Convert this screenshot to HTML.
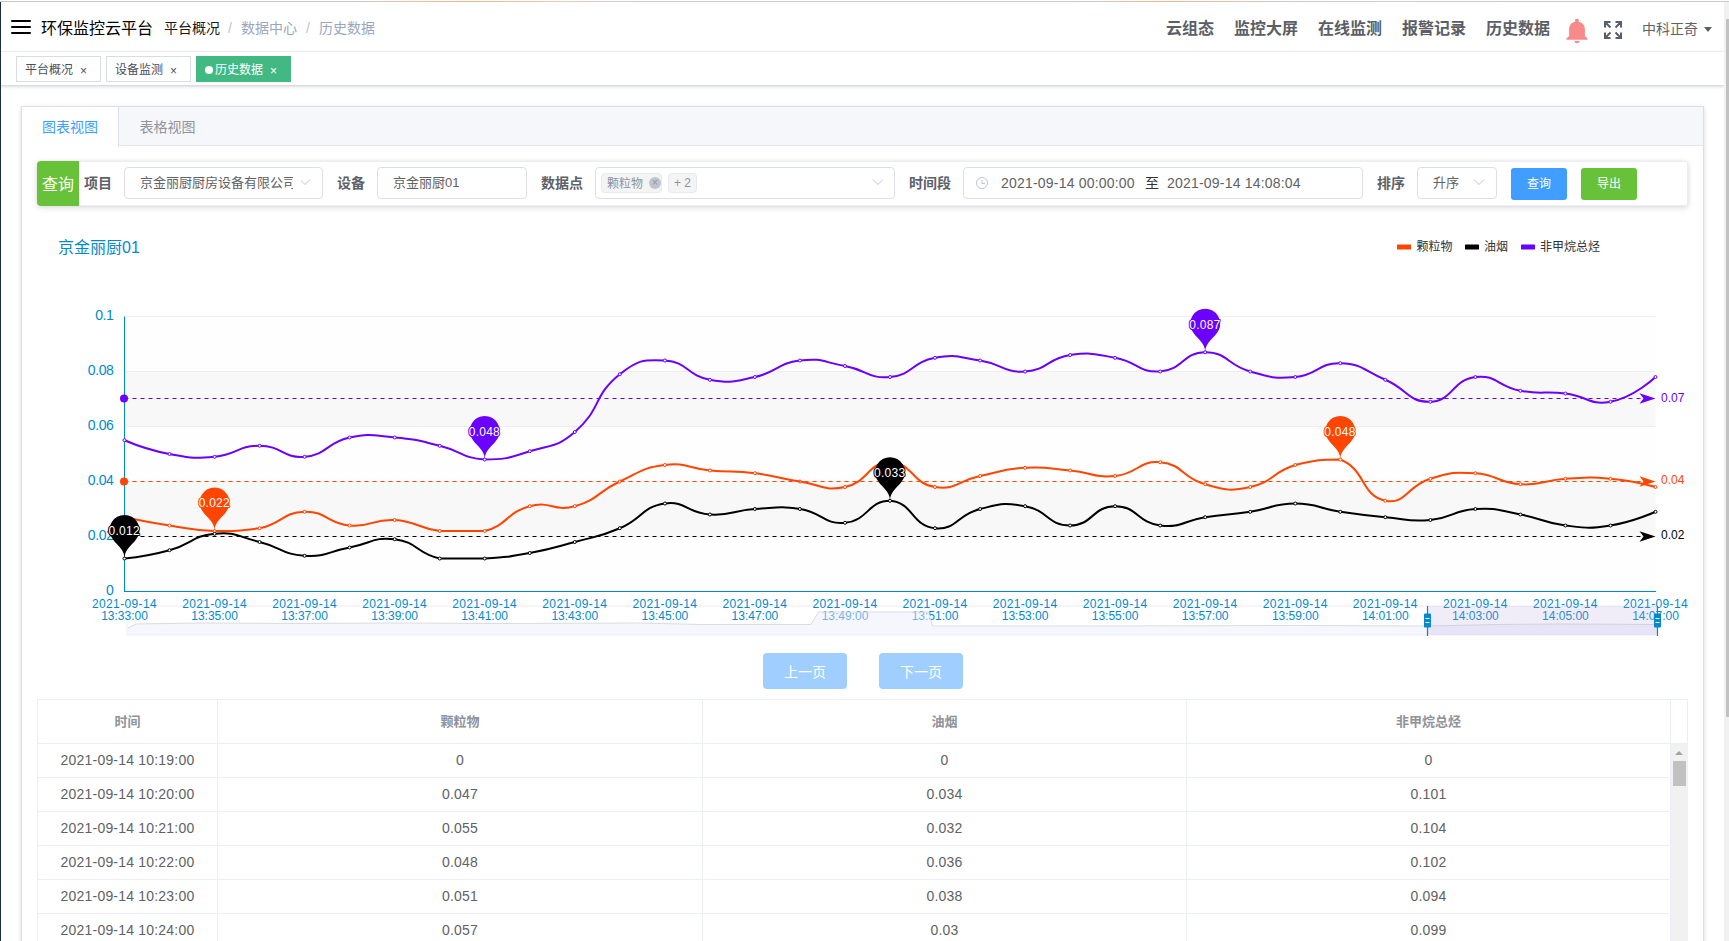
<!DOCTYPE html>
<html lang="zh-CN">
<head>
<meta charset="utf-8">
<title>环保监控云平台</title>
<style>
*{box-sizing:border-box}
html,body{margin:0;padding:0}
body{width:1729px;height:941px;overflow:hidden;background:#fff;position:relative;font-family:"Liberation Sans","Noto Sans CJK SC",sans-serif;color:#303133;font-size:14px}
.abs{position:absolute}
.topline{left:0;top:1px;width:1729px;height:1px;background:linear-gradient(90deg,#c9c9c9 0,#c9c9c9 20%,#e9c3a8 24%,#f0b48e 27%,#e6c9b6 32%,#cdcdcd 38%,#cdcdcd 62%,#e0c0ac 65%,#e8b898 68%,#d8c8c0 73%,#c9cfd2 80%,#c4ccd0 100%)}
.leftbar{left:0;top:2px;width:1px;height:939px;background:#1f2d43}
.pagescroll{left:1724px;top:2px;width:5px;height:939px;background:#f1f1f1}
.pagescroll i{position:absolute;left:2px;top:17px;width:3px;height:698px;background:#c1c1c1}
/* header */
.navbar{left:1px;top:2px;width:1723px;height:50px;background:#fff;border-bottom:1px solid #f3f3f3}
.ham{left:11px;top:20px;width:20px;height:14px}
.ham i{position:absolute;left:0;width:20px;height:2px;border-radius:1px;background:#000}
.title{left:41px;top:17px;font-size:16px;line-height:24px;color:#000;white-space:nowrap}
.bc{top:16px;font-size:14px;line-height:24px;white-space:nowrap}
.nav{top:17px;font-size:16px;line-height:24px;font-weight:bold;color:#5a5e66;white-space:nowrap}
.user{left:1642px;top:17px;font-size:14px;line-height:24px;color:#606266;white-space:nowrap}
/* tags */
.tagsbar{left:1px;top:52px;width:1723px;height:34px;background:#fff;border-bottom:1px solid #d8dce5;box-shadow:0 1px 3px 0 rgba(0,0,0,.12),0 0 3px 0 rgba(0,0,0,.04)}
.tag{top:56px;height:26px;border:1px solid #d8dce5;background:#fff;color:#495060;font-size:12px;line-height:26px;padding-left:8px;white-space:nowrap}
.tag.on{background:#42b983;border-color:#42b983;color:#fff}
.tag .x{position:absolute;top:1px;font-size:12px;margin-left:1px}
/* card */
.card{left:21px;top:106px;width:1683px;height:900px;border:1px solid #dcdfe6;background:#fff;box-shadow:0 2px 4px 0 rgba(0,0,0,.12),0 0 6px 0 rgba(0,0,0,.04)}
.tabhead{left:0;top:0;width:1681px;height:39px;background:#f5f7fa;border-bottom:1px solid #e4e7ed}
.tab1{left:0;top:0;width:97px;height:40px;background:#fff;border-right:1px solid #dcdfe6;color:#409eff;font-size:14px;line-height:40px;text-align:center;padding-right:0}
.tab2{left:97px;top:0;width:97px;height:40px;color:#909399;font-size:14px;line-height:40px;text-align:center}
/* filter */
.filter{left:37px;top:161px;width:1651px;height:45px;background:#fff;border-radius:4px 2px 2px 4px;box-shadow:inset 0 0 0 1px #ebeef5,0 2px 6px 0 rgba(0,0,0,.12),0 0 4px 0 rgba(0,0,0,.06)}
.qlabel{left:0;top:0;width:42px;height:45px;background:#67c23a;color:#fff;font-size:16px;line-height:47px;text-align:center;border-radius:4px 0 0 4px}
.flabel{top:0;height:46px;line-height:44px;font-size:14px;font-weight:bold;color:#5d6168;white-space:nowrap}
.inp{top:6px;height:32px;border:1px solid #dcdfe6;border-radius:4px;background:#fff;font-size:13px;line-height:30px;color:#606266;padding-left:15px;white-space:nowrap;overflow:hidden}
.btn{top:7px;width:56px;height:32px;border-radius:3px;color:#fff;font-size:12px;line-height:33px;text-align:center}
.pbtn{top:653px;width:84px;height:36px;border-radius:4px;background:#a0cfff;color:#fff;font-size:14px;line-height:38px;text-align:center}
/* table */
.tbl{left:37px;top:699px;width:1651px;height:260px;border:1px solid #ebeef5;border-bottom:none;background:#fff}
.th{top:0;height:44px;line-height:44px;font-size:13px;font-weight:bold;color:#909399;text-align:center;border-right:1px solid #ebeef5;border-bottom:1px solid #ebeef5}
.row{left:0;width:1632px;height:34px;border-bottom:1px solid #ebeef5}
.td{top:0;height:33px;line-height:32px;font-size:14px;letter-spacing:.2px;color:#606266;text-align:center;border-right:1px solid #ebeef5}
.c1{left:0;width:180px}.c2{left:180px;width:485px}.c3{left:665px;width:484px}.c4{left:1149px;width:484px}
.tscroll{left:1633px;top:44px;width:17px;height:220px;background:#f1f1f1}
</style>
</head>
<body>
<div class="abs topline"></div>
<div class="abs leftbar"></div>

<div class="abs navbar"></div>
<div class="abs ham"><i style="top:0"></i><i style="top:6px"></i><i style="top:12px"></i></div>
<div class="abs title">环保监控云平台</div>
<div class="abs bc" style="left:164px;color:#1a1a1a">平台概况</div>
<div class="abs bc" style="left:228px;color:#c0c4cc">/</div>
<div class="abs bc" style="left:241px;color:#97a8be">数据中心</div>
<div class="abs bc" style="left:306px;color:#c0c4cc">/</div>
<div class="abs bc" style="left:319px;color:#97a8be">历史数据</div>

<div class="abs nav" style="left:1166px">云组态</div>
<div class="abs nav" style="left:1234px">监控大屏</div>
<div class="abs nav" style="left:1318px">在线监测</div>
<div class="abs nav" style="left:1402px">报警记录</div>
<div class="abs nav" style="left:1486px">历史数据</div>
<svg class="abs" style="left:1565px;top:18px" width="24" height="26" viewBox="0 0 24 26"><path d="M10.100 2.200a1.850 1.400 0 0 1 3.700 0V4.100C17.800 4.600 19.900 7.400 19.900 11.700V17.900L22.500 20.500V21.700H1.400V20.500L4.100 17.900V11.700C4.100 7.400 6.100 4.600 10.100 4.100ZM9.400 22.900H14.500A2.550 2.300 0 0 1 9.400 22.900Z" fill="#f98a8a"/></svg>
<svg class="abs" style="left:1604px;top:21px" width="18" height="18" viewBox="0 0 18 18" fill="none" stroke="#5a5e66" stroke-width="2"><path d="M1 6.500V1h5.500M1.500 1.500L6.500 6.500M11.500 1H17v5.500M16.500 1.500L11.500 6.500M1 11.500V17h5.500M1.500 16.500L6.500 11.500M17 11.500V17h-5.500M16.500 16.500L11.500 11.500"/></svg>
<div class="abs user">中科正奇</div>
<div class="abs" style="left:1704px;top:27px;width:0;height:0;border-left:4px solid transparent;border-right:4px solid transparent;border-top:5px solid #5a5e66"></div>

<div class="abs tagsbar"></div>
<div class="abs tag" style="left:16px;width:85px">平台概况<span class="x" style="left:62px">×</span></div>
<div class="abs tag" style="left:106px;width:85px">设备监测<span class="x" style="left:62px">×</span></div>
<div class="abs tag on" style="left:196px;width:95px"><span style="display:inline-block;width:8px;height:8px;border-radius:50%;background:#fff;margin-right:2px;position:relative;top:0"></span>历史数据<span class="x" style="left:72px">×</span></div>

<div class="abs card">
  <div class="abs tabhead"></div>
  <div class="abs tab1">图表视图</div>
  <div class="abs tab2">表格视图</div>
</div>

<div class="abs filter">
  <div class="abs qlabel">查询</div>
  <div class="abs flabel" style="left:47px">项目</div>
  <div class="abs inp" style="left:87px;width:199px">京金丽厨厨房设备有限公司</div>
  <svg class="abs" style="left:262px;top:17px" width="12" height="8" viewBox="0 0 12 8" fill="none" stroke="#c0c4cc" stroke-width="1"><path d="M1 1.500l5 5 5-5"/></svg>
  <div class="abs" style="left:256px;top:8px;width:8px;height:28px;background:#fff"></div>
  <div class="abs flabel" style="left:300px">设备</div>
  <div class="abs inp" style="left:340px;width:150px">京金丽厨01</div>
  <div class="abs flabel" style="left:504px">数据点</div>
  <div class="abs inp" style="left:558px;width:300px"></div>
  <div class="abs" style="left:564px;top:12px;width:61px;height:20px;border:1px solid #e9e9eb;border-radius:4px;background:#f4f4f5;color:#909399;font-size:12px;line-height:20px;padding-left:5px">颗粒物</div>
  <div class="abs" style="left:612px;top:16px;width:12px;height:12px;border-radius:50%;background:#c0c4cc;color:#909399;font-size:10px;line-height:11px;text-align:center">×</div>
  <div class="abs" style="left:631px;top:12px;width:29px;height:20px;border:1px solid #e9e9eb;border-radius:4px;background:#f4f4f5;color:#909399;font-size:12px;line-height:18px;text-align:center">+ 2</div>
  <svg class="abs" style="left:835px;top:17px" width="12" height="8" viewBox="0 0 12 8" fill="none" stroke="#c0c4cc" stroke-width="1"><path d="M1 1.500l5 5 5-5"/></svg>
  <div class="abs flabel" style="left:872px">时间段</div>
  <div class="abs inp" style="left:926px;width:400px"></div>
  <svg class="abs" style="left:938px;top:15px" width="14" height="14" viewBox="0 0 14 14" fill="none" stroke="#c0c4cc" stroke-width="1"><circle cx="7" cy="7" r="5.500"/><path d="M7 3.500V7.500H10"/></svg>
  <div class="abs" style="left:964px;top:7px;font-size:14px;letter-spacing:.2px;line-height:31px;color:#606266;white-space:nowrap">2021-09-14 00:00:00</div>
  <div class="abs" style="left:1108px;top:7px;font-size:14px;line-height:30px;color:#303133">至</div>
  <div class="abs" style="left:1130px;top:7px;font-size:14px;letter-spacing:.2px;line-height:31px;color:#606266;white-space:nowrap">2021-09-14 14:08:04</div>
  <div class="abs flabel" style="left:1340px">排序</div>
  <div class="abs inp" style="left:1380px;width:80px">升序</div>
  <svg class="abs" style="left:1436px;top:17px" width="12" height="8" viewBox="0 0 12 8" fill="none" stroke="#c0c4cc" stroke-width="1"><path d="M1 1.500l5 5 5-5"/></svg>
  <div class="abs btn" style="left:1474px;background:#409eff">查询</div>
  <div class="abs btn" style="left:1544px;background:#67c23a">导出</div>
</div>

<svg class="chart" width="1729" height="440" viewBox="0 210 1729 440" style="position:absolute;left:0;top:210px">
<rect x="124.5" y="536.5" width="1531.0" height="55.0" fill="#fefefe"/>
<rect x="124.5" y="481.5" width="1531.0" height="55.0" fill="#f8f8f8"/>
<rect x="124.5" y="426.5" width="1531.0" height="55.0" fill="#fefefe"/>
<rect x="124.5" y="371.5" width="1531.0" height="55.0" fill="#f8f8f8"/>
<rect x="124.5" y="316.5" width="1531.0" height="55.0" fill="#fefefe"/>
<line x1="124.5" y1="536.5" x2="1655.5" y2="536.5" stroke="#eee" stroke-width="1"/>
<line x1="124.5" y1="481.5" x2="1655.5" y2="481.5" stroke="#eee" stroke-width="1"/>
<line x1="124.5" y1="426.5" x2="1655.5" y2="426.5" stroke="#eee" stroke-width="1"/>
<line x1="124.5" y1="371.5" x2="1655.5" y2="371.5" stroke="#eee" stroke-width="1"/>
<line x1="124.5" y1="316.5" x2="1655.5" y2="316.5" stroke="#eee" stroke-width="1"/>
<line x1="124.5" y1="316.5" x2="124.5" y2="591.5" stroke="#008acd" stroke-width="1"/>
<line x1="124.0" y1="591.5" x2="1656.0" y2="591.5" stroke="#008acd" stroke-width="1"/>
<text x="113.5" y="595.3" text-anchor="end" font-size="14" letter-spacing="-0.4" fill="#008acd" font-family="Liberation Sans, sans-serif">0</text>
<text x="113.5" y="540.3" text-anchor="end" font-size="14" letter-spacing="-0.4" fill="#008acd" font-family="Liberation Sans, sans-serif">0.02</text>
<text x="113.5" y="485.3" text-anchor="end" font-size="14" letter-spacing="-0.4" fill="#008acd" font-family="Liberation Sans, sans-serif">0.04</text>
<text x="113.5" y="430.3" text-anchor="end" font-size="14" letter-spacing="-0.4" fill="#008acd" font-family="Liberation Sans, sans-serif">0.06</text>
<text x="113.5" y="375.3" text-anchor="end" font-size="14" letter-spacing="-0.4" fill="#008acd" font-family="Liberation Sans, sans-serif">0.08</text>
<text x="113.5" y="320.3" text-anchor="end" font-size="14" letter-spacing="-0.4" fill="#008acd" font-family="Liberation Sans, sans-serif">0.1</text>
<rect x="127" y="606" width="1530" height="29" fill="#fff" stroke="#eeeef6" stroke-width="1"/>
<text x="124.5" y="608" text-anchor="middle" font-size="12" letter-spacing="0.35" fill="#008acd" font-family="Liberation Sans, sans-serif">2021-09-14</text>
<text x="124.5" y="620" text-anchor="middle" font-size="12" fill="#008acd" font-family="Liberation Sans, sans-serif">13:33:00</text>
<text x="214.6" y="608" text-anchor="middle" font-size="12" letter-spacing="0.35" fill="#008acd" font-family="Liberation Sans, sans-serif">2021-09-14</text>
<text x="214.6" y="620" text-anchor="middle" font-size="12" fill="#008acd" font-family="Liberation Sans, sans-serif">13:35:00</text>
<text x="304.6" y="608" text-anchor="middle" font-size="12" letter-spacing="0.35" fill="#008acd" font-family="Liberation Sans, sans-serif">2021-09-14</text>
<text x="304.6" y="620" text-anchor="middle" font-size="12" fill="#008acd" font-family="Liberation Sans, sans-serif">13:37:00</text>
<text x="394.7" y="608" text-anchor="middle" font-size="12" letter-spacing="0.35" fill="#008acd" font-family="Liberation Sans, sans-serif">2021-09-14</text>
<text x="394.7" y="620" text-anchor="middle" font-size="12" fill="#008acd" font-family="Liberation Sans, sans-serif">13:39:00</text>
<text x="484.7" y="608" text-anchor="middle" font-size="12" letter-spacing="0.35" fill="#008acd" font-family="Liberation Sans, sans-serif">2021-09-14</text>
<text x="484.7" y="620" text-anchor="middle" font-size="12" fill="#008acd" font-family="Liberation Sans, sans-serif">13:41:00</text>
<text x="574.8" y="608" text-anchor="middle" font-size="12" letter-spacing="0.35" fill="#008acd" font-family="Liberation Sans, sans-serif">2021-09-14</text>
<text x="574.8" y="620" text-anchor="middle" font-size="12" fill="#008acd" font-family="Liberation Sans, sans-serif">13:43:00</text>
<text x="664.9" y="608" text-anchor="middle" font-size="12" letter-spacing="0.35" fill="#008acd" font-family="Liberation Sans, sans-serif">2021-09-14</text>
<text x="664.9" y="620" text-anchor="middle" font-size="12" fill="#008acd" font-family="Liberation Sans, sans-serif">13:45:00</text>
<text x="754.9" y="608" text-anchor="middle" font-size="12" letter-spacing="0.35" fill="#008acd" font-family="Liberation Sans, sans-serif">2021-09-14</text>
<text x="754.9" y="620" text-anchor="middle" font-size="12" fill="#008acd" font-family="Liberation Sans, sans-serif">13:47:00</text>
<text x="845.0" y="608" text-anchor="middle" font-size="12" letter-spacing="0.35" fill="#008acd" font-family="Liberation Sans, sans-serif">2021-09-14</text>
<text x="845.0" y="620" text-anchor="middle" font-size="12" fill="#008acd" font-family="Liberation Sans, sans-serif">13:49:00</text>
<text x="935.0" y="608" text-anchor="middle" font-size="12" letter-spacing="0.35" fill="#008acd" font-family="Liberation Sans, sans-serif">2021-09-14</text>
<text x="935.0" y="620" text-anchor="middle" font-size="12" fill="#008acd" font-family="Liberation Sans, sans-serif">13:51:00</text>
<text x="1025.1" y="608" text-anchor="middle" font-size="12" letter-spacing="0.35" fill="#008acd" font-family="Liberation Sans, sans-serif">2021-09-14</text>
<text x="1025.1" y="620" text-anchor="middle" font-size="12" fill="#008acd" font-family="Liberation Sans, sans-serif">13:53:00</text>
<text x="1115.1" y="608" text-anchor="middle" font-size="12" letter-spacing="0.35" fill="#008acd" font-family="Liberation Sans, sans-serif">2021-09-14</text>
<text x="1115.1" y="620" text-anchor="middle" font-size="12" fill="#008acd" font-family="Liberation Sans, sans-serif">13:55:00</text>
<text x="1205.2" y="608" text-anchor="middle" font-size="12" letter-spacing="0.35" fill="#008acd" font-family="Liberation Sans, sans-serif">2021-09-14</text>
<text x="1205.2" y="620" text-anchor="middle" font-size="12" fill="#008acd" font-family="Liberation Sans, sans-serif">13:57:00</text>
<text x="1295.3" y="608" text-anchor="middle" font-size="12" letter-spacing="0.35" fill="#008acd" font-family="Liberation Sans, sans-serif">2021-09-14</text>
<text x="1295.3" y="620" text-anchor="middle" font-size="12" fill="#008acd" font-family="Liberation Sans, sans-serif">13:59:00</text>
<text x="1385.3" y="608" text-anchor="middle" font-size="12" letter-spacing="0.35" fill="#008acd" font-family="Liberation Sans, sans-serif">2021-09-14</text>
<text x="1385.3" y="620" text-anchor="middle" font-size="12" fill="#008acd" font-family="Liberation Sans, sans-serif">14:01:00</text>
<text x="1475.4" y="608" text-anchor="middle" font-size="12" letter-spacing="0.35" fill="#008acd" font-family="Liberation Sans, sans-serif">2021-09-14</text>
<text x="1475.4" y="620" text-anchor="middle" font-size="12" fill="#008acd" font-family="Liberation Sans, sans-serif">14:03:00</text>
<text x="1565.4" y="608" text-anchor="middle" font-size="12" letter-spacing="0.35" fill="#008acd" font-family="Liberation Sans, sans-serif">2021-09-14</text>
<text x="1565.4" y="620" text-anchor="middle" font-size="12" fill="#008acd" font-family="Liberation Sans, sans-serif">14:05:00</text>
<text x="1655.5" y="608" text-anchor="middle" font-size="12" letter-spacing="0.35" fill="#008acd" font-family="Liberation Sans, sans-serif">2021-09-14</text>
<text x="1655.5" y="620" text-anchor="middle" font-size="12" fill="#008acd" font-family="Liberation Sans, sans-serif">14:07:00</text>
<polygon points="127.0,635.0 128.0,628.0 136.0,624.0 200.0,623.0 300.0,623.5 400.0,623.0 500.0,623.5 640.0,623.0 700.0,624.5 811.0,624.5 818.5,612.0 928.5,612.0 932.5,626.0 1100.0,626.0 1300.0,625.5 1427.0,626.0 1500.0,624.5 1560.0,624.0 1657.0,624.5 1657.0,635.0" fill="rgba(236,236,252,0.45)"/>
<polyline points="128.0,628.0 136.0,624.0 200.0,623.0 300.0,623.5 400.0,623.0 500.0,623.5 640.0,623.0 700.0,624.5 811.0,624.5 818.5,612.0 928.5,612.0 932.5,626.0 1100.0,626.0 1300.0,625.5 1427.0,626.0 1500.0,624.5 1560.0,624.0 1657.0,624.5" fill="none" stroke="#dcdce0" stroke-width="1"/>
<rect x="1427.5" y="606" width="230.0" height="29" fill="rgba(182,162,222,0.2)"/>
<line x1="1427.5" y1="606" x2="1427.5" y2="636" stroke="#008acd" stroke-width="1.2"/>
<rect x="1424.0" y="613.5" width="7" height="14" rx="1" fill="#008acd"/>
<line x1="1425.5" y1="618.5" x2="1429.5" y2="618.5" stroke="#fff" stroke-width="1"/>
<line x1="1425.5" y1="622.5" x2="1429.5" y2="622.5" stroke="#fff" stroke-width="1"/>
<line x1="1657.5" y1="606" x2="1657.5" y2="636" stroke="#008acd" stroke-width="1.2"/>
<rect x="1654.0" y="613.5" width="7" height="14" rx="1" fill="#008acd"/>
<line x1="1655.5" y1="618.5" x2="1659.5" y2="618.5" stroke="#fff" stroke-width="1"/>
<line x1="1655.5" y1="622.5" x2="1659.5" y2="622.5" stroke="#fff" stroke-width="1"/>
<path d="M124.50 517.25C124.50 517.25 146.91 522.05 169.53 525.50C191.94 528.92 191.98 530.31 214.56 531.00C237.01 531.00 237.76 531.00 259.59 528.25C282.79 523.29 281.90 512.44 304.62 511.75C326.92 511.07 326.71 523.40 349.65 525.50C371.74 527.52 372.40 518.64 394.68 520.00C417.43 521.39 416.86 528.21 439.71 531.00C461.89 531.00 463.70 531.00 484.74 531.00C508.73 524.40 505.77 512.85 529.76 506.25C550.80 500.47 553.76 512.03 574.79 506.25C598.79 499.65 596.53 492.17 619.82 481.50C641.56 471.54 641.71 467.83 664.85 465.00C686.74 462.33 687.31 468.43 709.88 470.50C732.33 472.56 732.56 470.52 754.91 473.25C777.59 476.02 777.32 478.05 799.94 481.50C822.35 484.92 823.86 491.51 844.97 487.00C868.89 481.89 867.49 462.25 890.00 462.25C912.51 462.25 911.36 483.39 935.03 487.00C956.39 490.26 957.40 480.84 980.06 476.00C1002.43 471.22 1002.41 469.14 1025.09 467.75C1047.44 466.39 1047.67 468.44 1070.12 470.50C1092.69 472.57 1093.05 478.02 1115.15 476.00C1138.08 473.90 1138.36 460.25 1160.18 462.25C1183.39 464.38 1181.51 477.74 1205.21 484.25C1226.54 490.11 1228.90 491.56 1250.24 487.00C1273.93 481.93 1271.63 472.22 1295.26 465.00C1316.66 459.50 1321.10 459.50 1340.29 459.50C1366.13 469.76 1360.59 495.46 1385.32 500.75C1405.62 505.09 1406.72 485.97 1430.35 478.75C1451.75 472.22 1453.11 471.89 1475.38 473.25C1498.14 474.64 1497.65 482.86 1520.41 484.25C1542.68 485.61 1542.84 480.13 1565.44 478.75C1587.87 477.38 1588.14 476.70 1610.47 478.75C1633.17 480.83 1655.50 487.00 1655.50 487.00" fill="none" stroke="#ff4500" stroke-width="2" stroke-linejoin="round"/>
<path d="M124.50 558.50C124.50 558.50 147.54 556.29 169.53 550.25C192.57 543.92 191.52 535.86 214.56 533.75C236.55 531.74 237.39 536.58 259.59 542.00C282.42 547.58 281.79 554.36 304.62 555.75C326.82 557.11 327.13 551.62 349.65 547.50C372.16 543.38 372.92 536.59 394.68 539.25C417.95 542.09 416.25 553.49 439.71 558.50C461.28 558.50 462.30 558.50 484.74 558.50C507.33 557.12 507.49 557.08 529.76 553.00C552.52 548.83 552.45 548.14 574.79 542.00C597.48 535.76 598.29 537.45 619.82 528.25C643.32 518.20 641.18 507.11 664.85 503.50C686.21 500.75 687.12 513.11 709.88 514.50C732.15 515.86 732.31 510.38 754.91 509.00C777.34 507.63 777.93 505.64 799.94 509.00C822.96 512.51 823.16 524.75 844.97 522.75C868.19 520.62 868.06 500.75 890.00 500.75C913.09 502.16 911.68 526.11 935.03 528.25C956.71 530.24 956.62 514.73 980.06 509.00C1001.65 503.73 1003.50 502.29 1025.09 506.25C1048.53 510.54 1047.60 525.50 1070.12 525.50C1092.63 525.50 1092.63 506.25 1115.15 506.25C1137.66 506.25 1136.90 522.66 1160.18 525.50C1181.93 528.16 1182.59 520.70 1205.21 517.25C1227.62 513.83 1227.82 515.17 1250.24 511.75C1272.85 508.30 1272.75 503.50 1295.26 503.50C1317.78 503.50 1317.68 508.30 1340.29 511.75C1362.71 515.17 1362.75 515.18 1385.32 517.25C1407.78 519.31 1408.14 522.03 1430.35 520.00C1453.17 517.91 1452.62 510.39 1475.38 509.00C1497.65 507.64 1498.14 510.42 1520.41 514.50C1543.17 518.67 1542.60 522.71 1565.44 525.50C1587.63 528.21 1588.46 528.86 1610.47 525.50C1633.49 521.99 1655.50 511.75 1655.50 511.75" fill="none" stroke="#000000" stroke-width="2" stroke-linejoin="round"/>
<path d="M124.50 440.25C124.50 440.25 146.53 449.79 169.53 454.00C191.56 458.04 192.35 458.78 214.56 456.75C237.38 454.66 237.07 445.75 259.59 445.75C282.10 445.75 282.72 458.76 304.62 456.75C327.75 454.63 326.19 442.51 349.65 437.50C371.22 432.89 372.35 435.45 394.68 437.50C417.38 439.58 417.51 440.33 439.71 445.75C462.54 451.33 461.90 458.11 484.74 459.50C506.93 459.50 508.01 457.89 529.76 451.25C553.04 444.14 556.75 447.43 574.79 432.00C601.78 408.93 592.42 396.01 619.82 374.25C637.44 360.26 642.78 359.15 664.85 360.50C687.81 361.90 686.44 375.46 709.88 379.75C731.47 383.71 733.09 381.67 754.91 377.00C778.11 372.04 776.80 363.33 799.94 360.50C821.83 357.83 822.70 361.92 844.97 366.00C867.73 370.17 868.10 379.01 890.00 377.00C913.13 374.88 911.59 362.04 935.03 357.75C956.62 353.79 957.85 357.11 980.06 360.50C1002.88 363.98 1002.96 372.85 1025.09 371.50C1047.99 370.10 1046.91 358.54 1070.12 355.00C1091.94 352.25 1093.11 353.71 1115.15 357.75C1138.14 361.96 1138.10 372.85 1160.18 371.50C1183.13 370.10 1182.69 352.25 1205.21 352.25C1227.72 352.25 1226.86 365.08 1250.24 371.50C1271.89 377.45 1273.17 379.02 1295.26 377.00C1318.20 374.90 1317.99 362.57 1340.29 363.25C1363.02 363.94 1363.30 370.34 1385.32 379.75C1408.33 389.59 1408.12 402.43 1430.35 401.75C1453.15 401.05 1451.88 379.87 1475.38 377.00C1496.91 374.37 1497.42 386.54 1520.41 390.75C1542.45 394.79 1543.09 390.77 1565.44 393.50C1588.12 396.27 1589.25 405.64 1610.47 401.75C1634.28 397.39 1655.50 377.00 1655.50 377.00" fill="none" stroke="#6a00ff" stroke-width="2" stroke-linejoin="round"/>
<circle cx="124.5" cy="517.2" r="1.5" fill="#fff" stroke="#ff4500" stroke-width="1"/>
<circle cx="169.5" cy="525.5" r="1.5" fill="#fff" stroke="#ff4500" stroke-width="1"/>
<circle cx="214.6" cy="531.0" r="1.5" fill="#fff" stroke="#ff4500" stroke-width="1"/>
<circle cx="259.6" cy="528.2" r="1.5" fill="#fff" stroke="#ff4500" stroke-width="1"/>
<circle cx="304.6" cy="511.8" r="1.5" fill="#fff" stroke="#ff4500" stroke-width="1"/>
<circle cx="349.6" cy="525.5" r="1.5" fill="#fff" stroke="#ff4500" stroke-width="1"/>
<circle cx="394.7" cy="520.0" r="1.5" fill="#fff" stroke="#ff4500" stroke-width="1"/>
<circle cx="439.7" cy="531.0" r="1.5" fill="#fff" stroke="#ff4500" stroke-width="1"/>
<circle cx="484.7" cy="531.0" r="1.5" fill="#fff" stroke="#ff4500" stroke-width="1"/>
<circle cx="529.8" cy="506.2" r="1.5" fill="#fff" stroke="#ff4500" stroke-width="1"/>
<circle cx="574.8" cy="506.2" r="1.5" fill="#fff" stroke="#ff4500" stroke-width="1"/>
<circle cx="619.8" cy="481.5" r="1.5" fill="#fff" stroke="#ff4500" stroke-width="1"/>
<circle cx="664.9" cy="465.0" r="1.5" fill="#fff" stroke="#ff4500" stroke-width="1"/>
<circle cx="709.9" cy="470.5" r="1.5" fill="#fff" stroke="#ff4500" stroke-width="1"/>
<circle cx="754.9" cy="473.2" r="1.5" fill="#fff" stroke="#ff4500" stroke-width="1"/>
<circle cx="799.9" cy="481.5" r="1.5" fill="#fff" stroke="#ff4500" stroke-width="1"/>
<circle cx="845.0" cy="487.0" r="1.5" fill="#fff" stroke="#ff4500" stroke-width="1"/>
<circle cx="890.0" cy="462.2" r="1.5" fill="#fff" stroke="#ff4500" stroke-width="1"/>
<circle cx="935.0" cy="487.0" r="1.5" fill="#fff" stroke="#ff4500" stroke-width="1"/>
<circle cx="980.1" cy="476.0" r="1.5" fill="#fff" stroke="#ff4500" stroke-width="1"/>
<circle cx="1025.1" cy="467.8" r="1.5" fill="#fff" stroke="#ff4500" stroke-width="1"/>
<circle cx="1070.1" cy="470.5" r="1.5" fill="#fff" stroke="#ff4500" stroke-width="1"/>
<circle cx="1115.1" cy="476.0" r="1.5" fill="#fff" stroke="#ff4500" stroke-width="1"/>
<circle cx="1160.2" cy="462.2" r="1.5" fill="#fff" stroke="#ff4500" stroke-width="1"/>
<circle cx="1205.2" cy="484.2" r="1.5" fill="#fff" stroke="#ff4500" stroke-width="1"/>
<circle cx="1250.2" cy="487.0" r="1.5" fill="#fff" stroke="#ff4500" stroke-width="1"/>
<circle cx="1295.3" cy="465.0" r="1.5" fill="#fff" stroke="#ff4500" stroke-width="1"/>
<circle cx="1340.3" cy="459.5" r="1.5" fill="#fff" stroke="#ff4500" stroke-width="1"/>
<circle cx="1385.3" cy="500.8" r="1.5" fill="#fff" stroke="#ff4500" stroke-width="1"/>
<circle cx="1430.4" cy="478.8" r="1.5" fill="#fff" stroke="#ff4500" stroke-width="1"/>
<circle cx="1475.4" cy="473.2" r="1.5" fill="#fff" stroke="#ff4500" stroke-width="1"/>
<circle cx="1520.4" cy="484.2" r="1.5" fill="#fff" stroke="#ff4500" stroke-width="1"/>
<circle cx="1565.4" cy="478.8" r="1.5" fill="#fff" stroke="#ff4500" stroke-width="1"/>
<circle cx="1610.5" cy="478.8" r="1.5" fill="#fff" stroke="#ff4500" stroke-width="1"/>
<circle cx="1655.5" cy="487.0" r="1.5" fill="#fff" stroke="#ff4500" stroke-width="1"/>
<circle cx="124.5" cy="558.5" r="1.5" fill="#fff" stroke="#000000" stroke-width="1"/>
<circle cx="169.5" cy="550.2" r="1.5" fill="#fff" stroke="#000000" stroke-width="1"/>
<circle cx="214.6" cy="533.8" r="1.5" fill="#fff" stroke="#000000" stroke-width="1"/>
<circle cx="259.6" cy="542.0" r="1.5" fill="#fff" stroke="#000000" stroke-width="1"/>
<circle cx="304.6" cy="555.8" r="1.5" fill="#fff" stroke="#000000" stroke-width="1"/>
<circle cx="349.6" cy="547.5" r="1.5" fill="#fff" stroke="#000000" stroke-width="1"/>
<circle cx="394.7" cy="539.2" r="1.5" fill="#fff" stroke="#000000" stroke-width="1"/>
<circle cx="439.7" cy="558.5" r="1.5" fill="#fff" stroke="#000000" stroke-width="1"/>
<circle cx="484.7" cy="558.5" r="1.5" fill="#fff" stroke="#000000" stroke-width="1"/>
<circle cx="529.8" cy="553.0" r="1.5" fill="#fff" stroke="#000000" stroke-width="1"/>
<circle cx="574.8" cy="542.0" r="1.5" fill="#fff" stroke="#000000" stroke-width="1"/>
<circle cx="619.8" cy="528.2" r="1.5" fill="#fff" stroke="#000000" stroke-width="1"/>
<circle cx="664.9" cy="503.5" r="1.5" fill="#fff" stroke="#000000" stroke-width="1"/>
<circle cx="709.9" cy="514.5" r="1.5" fill="#fff" stroke="#000000" stroke-width="1"/>
<circle cx="754.9" cy="509.0" r="1.5" fill="#fff" stroke="#000000" stroke-width="1"/>
<circle cx="799.9" cy="509.0" r="1.5" fill="#fff" stroke="#000000" stroke-width="1"/>
<circle cx="845.0" cy="522.8" r="1.5" fill="#fff" stroke="#000000" stroke-width="1"/>
<circle cx="890.0" cy="500.8" r="1.5" fill="#fff" stroke="#000000" stroke-width="1"/>
<circle cx="935.0" cy="528.2" r="1.5" fill="#fff" stroke="#000000" stroke-width="1"/>
<circle cx="980.1" cy="509.0" r="1.5" fill="#fff" stroke="#000000" stroke-width="1"/>
<circle cx="1025.1" cy="506.2" r="1.5" fill="#fff" stroke="#000000" stroke-width="1"/>
<circle cx="1070.1" cy="525.5" r="1.5" fill="#fff" stroke="#000000" stroke-width="1"/>
<circle cx="1115.1" cy="506.2" r="1.5" fill="#fff" stroke="#000000" stroke-width="1"/>
<circle cx="1160.2" cy="525.5" r="1.5" fill="#fff" stroke="#000000" stroke-width="1"/>
<circle cx="1205.2" cy="517.2" r="1.5" fill="#fff" stroke="#000000" stroke-width="1"/>
<circle cx="1250.2" cy="511.8" r="1.5" fill="#fff" stroke="#000000" stroke-width="1"/>
<circle cx="1295.3" cy="503.5" r="1.5" fill="#fff" stroke="#000000" stroke-width="1"/>
<circle cx="1340.3" cy="511.8" r="1.5" fill="#fff" stroke="#000000" stroke-width="1"/>
<circle cx="1385.3" cy="517.2" r="1.5" fill="#fff" stroke="#000000" stroke-width="1"/>
<circle cx="1430.4" cy="520.0" r="1.5" fill="#fff" stroke="#000000" stroke-width="1"/>
<circle cx="1475.4" cy="509.0" r="1.5" fill="#fff" stroke="#000000" stroke-width="1"/>
<circle cx="1520.4" cy="514.5" r="1.5" fill="#fff" stroke="#000000" stroke-width="1"/>
<circle cx="1565.4" cy="525.5" r="1.5" fill="#fff" stroke="#000000" stroke-width="1"/>
<circle cx="1610.5" cy="525.5" r="1.5" fill="#fff" stroke="#000000" stroke-width="1"/>
<circle cx="1655.5" cy="511.8" r="1.5" fill="#fff" stroke="#000000" stroke-width="1"/>
<circle cx="124.5" cy="440.2" r="1.5" fill="#fff" stroke="#6a00ff" stroke-width="1"/>
<circle cx="169.5" cy="454.0" r="1.5" fill="#fff" stroke="#6a00ff" stroke-width="1"/>
<circle cx="214.6" cy="456.8" r="1.5" fill="#fff" stroke="#6a00ff" stroke-width="1"/>
<circle cx="259.6" cy="445.8" r="1.5" fill="#fff" stroke="#6a00ff" stroke-width="1"/>
<circle cx="304.6" cy="456.8" r="1.5" fill="#fff" stroke="#6a00ff" stroke-width="1"/>
<circle cx="349.6" cy="437.5" r="1.5" fill="#fff" stroke="#6a00ff" stroke-width="1"/>
<circle cx="394.7" cy="437.5" r="1.5" fill="#fff" stroke="#6a00ff" stroke-width="1"/>
<circle cx="439.7" cy="445.8" r="1.5" fill="#fff" stroke="#6a00ff" stroke-width="1"/>
<circle cx="484.7" cy="459.5" r="1.5" fill="#fff" stroke="#6a00ff" stroke-width="1"/>
<circle cx="529.8" cy="451.2" r="1.5" fill="#fff" stroke="#6a00ff" stroke-width="1"/>
<circle cx="574.8" cy="432.0" r="1.5" fill="#fff" stroke="#6a00ff" stroke-width="1"/>
<circle cx="619.8" cy="374.2" r="1.5" fill="#fff" stroke="#6a00ff" stroke-width="1"/>
<circle cx="664.9" cy="360.5" r="1.5" fill="#fff" stroke="#6a00ff" stroke-width="1"/>
<circle cx="709.9" cy="379.8" r="1.5" fill="#fff" stroke="#6a00ff" stroke-width="1"/>
<circle cx="754.9" cy="377.0" r="1.5" fill="#fff" stroke="#6a00ff" stroke-width="1"/>
<circle cx="799.9" cy="360.5" r="1.5" fill="#fff" stroke="#6a00ff" stroke-width="1"/>
<circle cx="845.0" cy="366.0" r="1.5" fill="#fff" stroke="#6a00ff" stroke-width="1"/>
<circle cx="890.0" cy="377.0" r="1.5" fill="#fff" stroke="#6a00ff" stroke-width="1"/>
<circle cx="935.0" cy="357.8" r="1.5" fill="#fff" stroke="#6a00ff" stroke-width="1"/>
<circle cx="980.1" cy="360.5" r="1.5" fill="#fff" stroke="#6a00ff" stroke-width="1"/>
<circle cx="1025.1" cy="371.5" r="1.5" fill="#fff" stroke="#6a00ff" stroke-width="1"/>
<circle cx="1070.1" cy="355.0" r="1.5" fill="#fff" stroke="#6a00ff" stroke-width="1"/>
<circle cx="1115.1" cy="357.8" r="1.5" fill="#fff" stroke="#6a00ff" stroke-width="1"/>
<circle cx="1160.2" cy="371.5" r="1.5" fill="#fff" stroke="#6a00ff" stroke-width="1"/>
<circle cx="1205.2" cy="352.2" r="1.5" fill="#fff" stroke="#6a00ff" stroke-width="1"/>
<circle cx="1250.2" cy="371.5" r="1.5" fill="#fff" stroke="#6a00ff" stroke-width="1"/>
<circle cx="1295.3" cy="377.0" r="1.5" fill="#fff" stroke="#6a00ff" stroke-width="1"/>
<circle cx="1340.3" cy="363.2" r="1.5" fill="#fff" stroke="#6a00ff" stroke-width="1"/>
<circle cx="1385.3" cy="379.8" r="1.5" fill="#fff" stroke="#6a00ff" stroke-width="1"/>
<circle cx="1430.4" cy="401.8" r="1.5" fill="#fff" stroke="#6a00ff" stroke-width="1"/>
<circle cx="1475.4" cy="377.0" r="1.5" fill="#fff" stroke="#6a00ff" stroke-width="1"/>
<circle cx="1520.4" cy="390.8" r="1.5" fill="#fff" stroke="#6a00ff" stroke-width="1"/>
<circle cx="1565.4" cy="393.5" r="1.5" fill="#fff" stroke="#6a00ff" stroke-width="1"/>
<circle cx="1610.5" cy="401.8" r="1.5" fill="#fff" stroke="#6a00ff" stroke-width="1"/>
<circle cx="1655.5" cy="377.0" r="1.5" fill="#fff" stroke="#6a00ff" stroke-width="1"/>
<line x1="124.5" y1="481.5" x2="1647.5" y2="481.5" stroke="#ff4500" stroke-width="1" stroke-dasharray="4 4"/>
<circle cx="124.0" cy="481.5" r="4" fill="#ff4500"/>
<path d="M1655.5 481.5 L1639.5 476.2 L1643.5 481.5 L1639.5 486.8 Z" fill="#ff4500"/>
<text x="1661.0" y="484.0" font-size="12" fill="#ff4500" font-family="Liberation Sans, sans-serif">0.04</text>
<line x1="124.5" y1="536.5" x2="1647.5" y2="536.5" stroke="#000000" stroke-width="1" stroke-dasharray="4 4"/>
<circle cx="124.0" cy="536.5" r="4" fill="#000000"/>
<path d="M1655.5 536.5 L1639.5 531.2 L1643.5 536.5 L1639.5 541.8 Z" fill="#000000"/>
<text x="1661.0" y="539.0" font-size="12" fill="#000000" font-family="Liberation Sans, sans-serif">0.02</text>
<line x1="124.5" y1="398.5" x2="1647.5" y2="398.5" stroke="#6a00ff" stroke-width="1" stroke-dasharray="4 4"/>
<circle cx="124.0" cy="398.5" r="4" fill="#6a00ff"/>
<path d="M1655.5 398.5 L1639.5 393.2 L1643.5 398.5 L1639.5 403.8 Z" fill="#6a00ff"/>
<text x="1661.0" y="401.5" font-size="12" fill="#6a00ff" font-family="Liberation Sans, sans-serif">0.07</text>
<path d="M1326.74 437.36A15.00 15.00 0 1 1 1353.85 437.36C1349.99 445.49 1340.29 449.00 1340.29 459.50C1340.29 449.00 1330.60 445.49 1326.74 437.36Z" fill="#ff4500"/>
<text x="1340.0" y="435.8" text-anchor="middle" font-size="12" letter-spacing="0.25" fill="#fff" stroke="#ff4500" stroke-width="2" stroke-linejoin="round" paint-order="stroke" font-family="Liberation Sans, sans-serif">0.048</text>
<path d="M201.01 508.86A15.00 15.00 0 1 1 228.11 508.86C224.25 516.99 214.56 520.50 214.56 531.00C214.56 520.50 204.86 516.99 201.01 508.86Z" fill="#ff4500"/>
<text x="214.3" y="507.3" text-anchor="middle" font-size="12" letter-spacing="0.25" fill="#fff" stroke="#ff4500" stroke-width="2" stroke-linejoin="round" paint-order="stroke" font-family="Liberation Sans, sans-serif">0.022</text>
<path d="M876.45 478.61A15.00 15.00 0 1 1 903.55 478.61C899.70 486.74 890.00 490.25 890.00 500.75C890.00 490.25 880.30 486.74 876.45 478.61Z" fill="#000000"/>
<text x="889.7" y="477.1" text-anchor="middle" font-size="12" letter-spacing="0.25" fill="#fff" stroke="#000000" stroke-width="2" stroke-linejoin="round" paint-order="stroke" font-family="Liberation Sans, sans-serif">0.033</text>
<path d="M110.95 536.36A15.00 15.00 0 1 1 138.05 536.36C134.20 544.49 124.50 548.00 124.50 558.50C124.50 548.00 114.80 544.49 110.95 536.36Z" fill="#000000"/>
<text x="124.2" y="534.8" text-anchor="middle" font-size="12" letter-spacing="0.25" fill="#fff" stroke="#000000" stroke-width="2" stroke-linejoin="round" paint-order="stroke" font-family="Liberation Sans, sans-serif">0.012</text>
<path d="M1191.65 330.11A15.00 15.00 0 1 1 1218.76 330.11C1214.90 338.24 1205.21 341.75 1205.21 352.25C1205.21 341.75 1195.51 338.24 1191.65 330.11Z" fill="#6a00ff"/>
<text x="1204.9" y="328.6" text-anchor="middle" font-size="12" letter-spacing="0.25" fill="#fff" stroke="#6a00ff" stroke-width="2" stroke-linejoin="round" paint-order="stroke" font-family="Liberation Sans, sans-serif">0.087</text>
<path d="M471.18 437.36A15.00 15.00 0 1 1 498.29 437.36C494.43 445.49 484.74 449.00 484.74 459.50C484.74 449.00 475.04 445.49 471.18 437.36Z" fill="#6a00ff"/>
<text x="484.4" y="435.8" text-anchor="middle" font-size="12" letter-spacing="0.25" fill="#fff" stroke="#6a00ff" stroke-width="2" stroke-linejoin="round" paint-order="stroke" font-family="Liberation Sans, sans-serif">0.048</text>
<text x="58" y="253" font-size="16" fill="#008acd" font-family="Liberation Sans, Noto Sans CJK SC, sans-serif">京金丽厨01</text>
<rect x="1397.0" y="244.5" width="14" height="5" rx="0.5" fill="#ff4500"/>
<text x="1416.5" y="250.6" font-size="12" fill="#333" font-family="Liberation Sans, Noto Sans CJK SC, sans-serif">颗粒物</text>
<rect x="1465.0" y="244.5" width="14" height="5" rx="0.5" fill="#000"/>
<text x="1484.0" y="250.6" font-size="12" fill="#333" font-family="Liberation Sans, Noto Sans CJK SC, sans-serif">油烟</text>
<rect x="1521.0" y="244.5" width="14" height="5" rx="0.5" fill="#6a00ff"/>
<text x="1540.0" y="250.6" font-size="12" fill="#333" font-family="Liberation Sans, Noto Sans CJK SC, sans-serif">非甲烷总烃</text>
</svg>

<div class="abs pbtn" style="left:763px">上一页</div>
<div class="abs pbtn" style="left:879px">下一页</div>

<div class="abs tbl">
  <div class="abs th c1">时间</div>
  <div class="abs th c2">颗粒物</div>
  <div class="abs th c3">油烟</div>
  <div class="abs th c4">非甲烷总烃</div>
  <div class="abs" style="left:1633px;top:0;width:17px;height:44px;border-bottom:1px solid #ebeef5"></div>
  <div class="abs row" style="top:44px"><div class="abs td c1">2021-09-14 10:19:00</div><div class="abs td c2">0</div><div class="abs td c3">0</div><div class="abs td c4">0</div></div>
  <div class="abs row" style="top:78px"><div class="abs td c1">2021-09-14 10:20:00</div><div class="abs td c2">0.047</div><div class="abs td c3">0.034</div><div class="abs td c4">0.101</div></div>
  <div class="abs row" style="top:112px"><div class="abs td c1">2021-09-14 10:21:00</div><div class="abs td c2">0.055</div><div class="abs td c3">0.032</div><div class="abs td c4">0.104</div></div>
  <div class="abs row" style="top:146px"><div class="abs td c1">2021-09-14 10:22:00</div><div class="abs td c2">0.048</div><div class="abs td c3">0.036</div><div class="abs td c4">0.102</div></div>
  <div class="abs row" style="top:180px"><div class="abs td c1">2021-09-14 10:23:00</div><div class="abs td c2">0.051</div><div class="abs td c3">0.038</div><div class="abs td c4">0.094</div></div>
  <div class="abs row" style="top:214px"><div class="abs td c1">2021-09-14 10:24:00</div><div class="abs td c2">0.057</div><div class="abs td c3">0.03</div><div class="abs td c4">0.099</div></div>
  <div class="abs tscroll">
    <div class="abs" style="left:4px;top:7px;width:0;height:0;border-left:4px solid transparent;border-right:4px solid transparent;border-bottom:4px solid #a3a3a3"></div>
    <div class="abs" style="left:2px;top:17px;width:13px;height:25px;background:#c1c1c1"></div>
  </div>
</div>

<div class="abs pagescroll"><i></i></div>
</body>
</html>
